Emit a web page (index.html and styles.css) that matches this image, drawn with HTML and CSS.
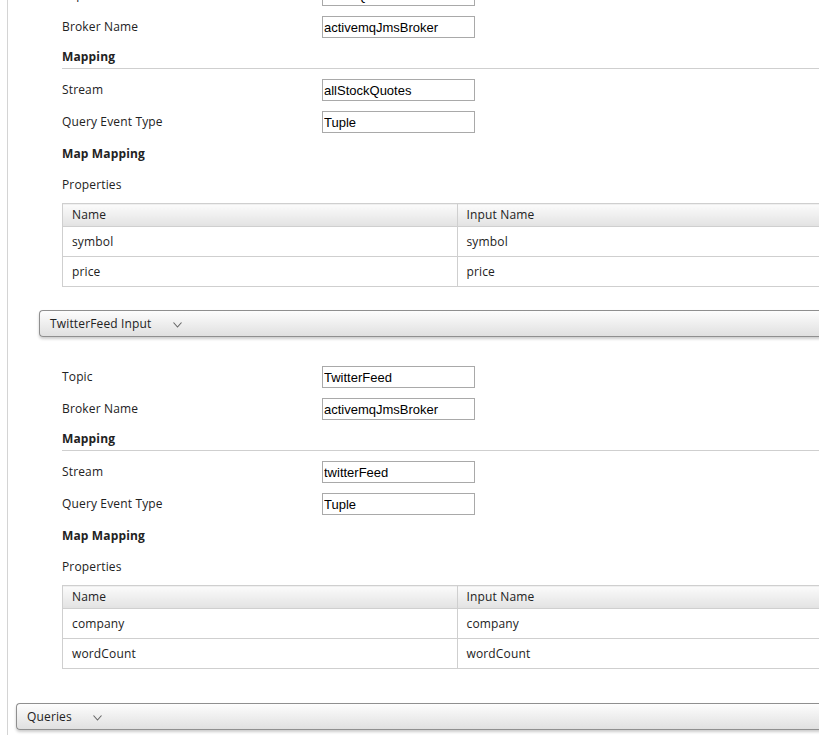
FILE: index.html
```html
<!DOCTYPE html>
<html lang="en">
<head>
    <meta charset="UTF-8" />
    <title>Adapter Configuration</title>
    <link rel="stylesheet" href="styles.css">
</head>
<body>
    <div class="page">
        <div class="inputs">
            <!-- StockQuotes input (scrolled, header above view) -->
            <div class="panel-body scrolled">
                <div class="field">
                    <label>Topic</label>
                    <input type="text" value="StockQuotes">
                </div>
                <div class="field">
                    <label>Broker Name</label>
                    <input type="text" value="activemqJmsBroker">
                </div>
                <div class="section-title ruled">Mapping</div>
                <div class="field">
                    <label>Stream</label>
                    <input type="text" value="allStockQuotes">
                </div>
                <div class="field">
                    <label>Query Event Type</label>
                    <input type="text" value="Tuple">
                </div>
                <div class="section-title">Map Mapping</div>
                <div class="props-label">Properties</div>
                <table class="props">
                    <tr><th>Name</th><th>Input Name</th></tr>
                    <tr><td>symbol</td><td>symbol</td></tr>
                    <tr><td>price</td><td>price</td></tr>
                </table>
            </div>

            <div class="panel-header">
                <span>TwitterFeed Input</span>
                <svg class="chevron" width="9" height="6" viewBox="0 0 9 6"><polyline points="0.5,0.5 4.5,5 8.5,0.5" fill="none" stroke="#666" stroke-width="1.1"/></svg>
            </div>
            <div class="panel-body">
                <div class="field">
                    <label>Topic</label>
                    <input type="text" value="TwitterFeed">
                </div>
                <div class="field">
                    <label>Broker Name</label>
                    <input type="text" value="activemqJmsBroker">
                </div>
                <div class="section-title ruled">Mapping</div>
                <div class="field">
                    <label>Stream</label>
                    <input type="text" value="twitterFeed">
                </div>
                <div class="field">
                    <label>Query Event Type</label>
                    <input type="text" value="Tuple">
                </div>
                <div class="section-title">Map Mapping</div>
                <div class="props-label">Properties</div>
                <table class="props">
                    <tr><th>Name</th><th>Input Name</th></tr>
                    <tr><td>company</td><td>company</td></tr>
                    <tr><td>wordCount</td><td>wordCount</td></tr>
                </table>
            </div>
        </div>

        <div class="panel-header outer">
            <span>Queries</span>
            <svg class="chevron" width="9" height="6" viewBox="0 0 9 6"><polyline points="0.5,0.5 4.5,5 8.5,0.5" fill="none" stroke="#666" stroke-width="1.1"/></svg>
        </div>
    </div>
</body>
</html>
```

FILE: styles.css
```css
body {
    margin: 0;
    overflow: hidden;
    background: #fff;
    font-family: 'Open Sans', 'Noto Sans', sans-serif;
    font-size: 12px;
    letter-spacing: 0.15px;
    color: #222;
}

.page {
    margin-left: 7px;
    border-left: 1px solid #d4d4d4;
    padding-left: 8px;
    width: 900px;
    height: 100vh;
}

.inputs {
    padding-left: 23px;
    padding-bottom: 34px;
}

.panel-body {
    padding-left: 23px;
}

.panel-body.scrolled {
    margin-top: -21px;
}

.field {
    display: flex;
    align-items: center;
    height: 32px;
}

.field label {
    width: 260px;
    line-height: 15px;
    margin-top: -1px;
}

.field input {
    box-sizing: border-box;
    width: 153px;
    height: 22px;
    margin: 0;
    padding: 0 1px;
    border: 1px solid #a9a9a9;
    font-family: 'Liberation Sans', Arial, sans-serif;
    font-size: 13px;
    letter-spacing: 0;
    color: #000;
    outline: none;
}

.section-title {
    font-weight: bold;
    line-height: 15px;
    padding-top: 8px;
}

.section-title.ruled {
    padding-top: 6px;
    padding-bottom: 4px;
    border-bottom: 1px solid #cfcfcf;
    margin-bottom: 5px;
}

.props-label {
    line-height: 15px;
    margin-top: 16px;
    margin-bottom: 11px;
}

.props {
    width: 790px;
    border-collapse: collapse;
    border: 1px solid #cfcfcf;
    margin-bottom: 23px;
}

.props th,
.props td {
    width: 50%;
    border: 1px solid #cfcfcf;
    padding: 0 0 0 9px;
    text-align: left;
    font-weight: normal;
}

.props th {
    height: 20px;
    padding-bottom: 2px;
    background: linear-gradient(#fbfbfb, #e2e2e2);
}

.props td {
    height: 29px;
}

.panel-body:last-child .props {
    margin-bottom: 0;
}

.panel-header {
    display: flex;
    align-items: center;
    gap: 21px;
    box-sizing: border-box;
    height: 27px;
    padding-left: 10px;
    border: 1px solid #8f8f8f;
    border-right: none;
    border-radius: 4px 0 0 4px;
    background: linear-gradient(#fdfdfd, #e0e0e0);
    box-shadow: 0 2px 3px rgba(0, 0, 0, 0.2);
    margin-bottom: 24px;
    font-size: 12px;
    color: #222;
}

.panel-header .chevron {
    margin-top: 2px;
}
```
